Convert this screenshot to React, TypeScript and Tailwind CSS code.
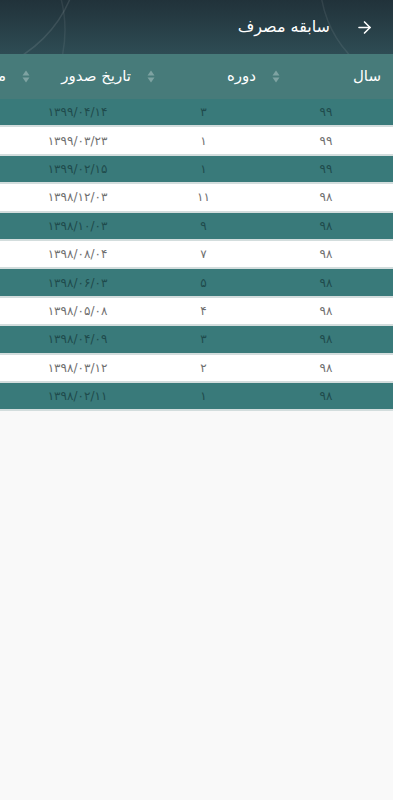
import { ArrowRight } from 'lucide-react'

const rows = [
  { year: '۹۹', period: '۳', date: '۱۳۹۹/۰۴/۱۴' },
  { year: '۹۹', period: '۱', date: '۱۳۹۹/۰۳/۲۳' },
  { year: '۹۹', period: '۱', date: '۱۳۹۹/۰۲/۱۵' },
  { year: '۹۸', period: '۱۱', date: '۱۳۹۸/۱۲/۰۳' },
  { year: '۹۸', period: '۹', date: '۱۳۹۸/۱۰/۰۳' },
  { year: '۹۸', period: '۷', date: '۱۳۹۸/۰۸/۰۴' },
  { year: '۹۸', period: '۵', date: '۱۳۹۸/۰۶/۰۳' },
  { year: '۹۸', period: '۴', date: '۱۳۹۸/۰۵/۰۸' },
  { year: '۹۸', period: '۳', date: '۱۳۹۸/۰۴/۰۹' },
  { year: '۹۸', period: '۲', date: '۱۳۹۸/۰۳/۱۲' },
  { year: '۹۸', period: '۱', date: '۱۳۹۸/۰۲/۱۱' },
]

const columns = ['سال', 'دوره', 'تاریخ صدور', 'مبلغ']

function SortIcon() {
  return (
    <svg width="8" height="13" viewBox="0 0 8 13" className="shrink-0">
      <path d="M4 0.5 L7.5 5.5 H0.5 Z" fill="#7ea3a2" />
      <path d="M4 12.5 L7.5 7.5 H0.5 Z" fill="#7ea3a2" />
    </svg>
  )
}

export default function App() {
  return (
    <div
      dir="rtl"
      className="min-h-[800px] bg-[#f9f9f9]"
      style={{ fontFamily: '"DejaVu Sans", sans-serif' }}
    >
      {/* Top bar */}
      <div className="relative h-[54px] overflow-hidden bg-gradient-to-b from-[#21323a] to-[#2e4c54] flex items-center pr-[19px] gap-[25px]">
        <svg className="absolute inset-0 pointer-events-none" width="393" height="54" viewBox="0 0 393 54">
          <circle cx="-45" cy="-50" r="125" fill="none" stroke="#ffffff" strokeOpacity="0.1" strokeWidth="1.5" />
          <circle cx="-60" cy="30" r="125" fill="none" stroke="#ffffff" strokeOpacity="0.07" strokeWidth="1.5" />
          <circle cx="430" cy="-20" r="110" fill="none" stroke="#ffffff" strokeOpacity="0.08" strokeWidth="1.5" />
        </svg>
        <ArrowRight size={19} strokeWidth={2} className="text-white relative" />
        <span className="text-white text-[16px] relative">سابقه مصرف</span>
      </div>

      {/* Table */}
      <div className="overflow-hidden">
        <div className="flex h-[45px] bg-[#477b7a] w-max">
          {columns.map((c) => (
            <div key={c} className="w-[125px] shrink-0 flex items-center justify-between pr-[12px] pl-[4px]">
              <span className="text-white text-[15px] font-medium">{c}</span>
              <SortIcon />
            </div>
          ))}
        </div>
        {rows.map((r, i) => {
          const teal = i % 2 === 0
          return (
            <div
              key={i}
              className={`flex w-max h-[28.4px] border-b-2 border-[#d3dddd] text-[12px] ${
                teal ? 'bg-[#397a7a] text-[#1f4b4c]' : 'bg-white text-[#6f6f6f]'
              }`}
            >
              <div className="w-[125px] shrink-0 flex items-center justify-center pr-[9px]">{r.year}</div>
              <div className="w-[125px] shrink-0 flex items-center justify-center pr-[4px]">{r.period}</div>
              <div className="w-[125px] shrink-0 flex items-center justify-center pr-[6px]">{r.date}</div>
              <div className="w-[125px] shrink-0" />
            </div>
          )
        })}
      </div>
    </div>
  )
}
